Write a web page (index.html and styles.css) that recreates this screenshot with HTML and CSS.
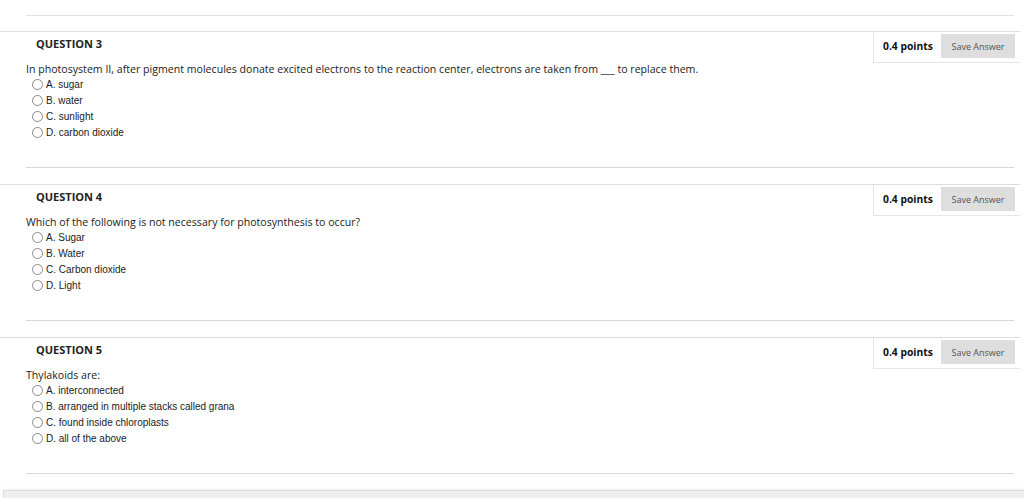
FILE: index.html
```html
<!DOCTYPE html>
<html>
<head>
<meta charset="utf-8">
<link rel="stylesheet" href="styles.css">
</head>
<body>
<div class="page">
  <div class="top-rule"></div>

  <div class="question">
    <div class="q-head">
      <div class="q-title">QUESTION 3</div>
      <div class="points-box">
        <span class="points">0.4 points</span>
        <button class="save">Save Answer</button>
      </div>
    </div>
    <div class="q-text">In photosystem II, after pigment molecules donate excited electrons to the reaction center, electrons are taken from ___ to replace them.</div>
    <ul class="options">
      <li><span class="radio"></span>A. sugar</li>
      <li><span class="radio"></span>B. water</li>
      <li><span class="radio"></span>C. sunlight</li>
      <li><span class="radio"></span>D. carbon dioxide</li>
    </ul>
    <div class="q-rule"></div>
  </div>

  <div class="question">
    <div class="q-head">
      <div class="q-title">QUESTION 4</div>
      <div class="points-box">
        <span class="points">0.4 points</span>
        <button class="save">Save Answer</button>
      </div>
    </div>
    <div class="q-text">Which of the following is not necessary for photosynthesis to occur?</div>
    <ul class="options">
      <li><span class="radio"></span>A. Sugar</li>
      <li><span class="radio"></span>B. Water</li>
      <li><span class="radio"></span>C. Carbon dioxide</li>
      <li><span class="radio"></span>D. Light</li>
    </ul>
    <div class="q-rule"></div>
  </div>

  <div class="question">
    <div class="q-head">
      <div class="q-title">QUESTION 5</div>
      <div class="points-box">
        <span class="points">0.4 points</span>
        <button class="save">Save Answer</button>
      </div>
    </div>
    <div class="q-text">Thylakoids are:</div>
    <ul class="options">
      <li><span class="radio"></span>A. interconnected</li>
      <li><span class="radio"></span>B. arranged in multiple stacks called grana</li>
      <li><span class="radio"></span>C. found inside chloroplasts</li>
      <li><span class="radio"></span>D. all of the above</li>
    </ul>
    <div class="q-rule"></div>
  </div>

  <div class="bottom-bar"></div>
</div>
</body>
</html>
```

FILE: styles.css
```css
* { box-sizing: border-box; }
html, body {
  margin: 0;
  padding: 0;
  background: #fff;
  overflow: hidden;
}
body {
  font-family: "Open Sans", "Liberation Sans", sans-serif;
  color: #222;
  width: 1024px;
  height: 498px;
}
.page {
  padding-top: 15px;
}
.top-rule {
  height: 1px;
  background: #e2e2e2;
  margin: 0 10px 15px 26px;
}
.question {
  border-top: 1px solid #dcdcdc;
  margin-right: 4px;
}
.q-head {
  display: flex;
  justify-content: space-between;
  align-items: flex-start;
  height: 31px;
}
.q-title {
  font-weight: 700;
  font-size: 11px;
  line-height: 14px;
  padding: 5px 0 0 36px;
  color: #222;
}
.points-box {
  display: flex;
  align-items: flex-start;
  height: 31px;
  width: 147px;
  border-left: 1px solid #e6e6e6;
  border-bottom: 1px solid #e6e6e6;
  padding: 2px 0 0 0;
}
.points {
  font-weight: 700;
  font-size: 10.3px;
  line-height: 24px;
  padding-left: 9px;
  width: 67px;
  color: #111;
}
.save {
  font-family: "Open Sans", "Liberation Sans", sans-serif;
  font-size: 9px;
  color: #555;
  background: #dedede;
  border: none;
  width: 74px;
  height: 24px;
  padding: 0;
  margin: 0;
}
.q-text {
  font-size: 10.6px;
  line-height: 13px;
  padding-left: 26px;
  color: #222;
}
.options {
  list-style: none;
  margin: 0;
  padding: 0 0 0 32px;
  font-family: "Liberation Sans", Arial, sans-serif;
  font-size: 10px;
  color: #1a1a1a;
}
.options li {
  display: flex;
  align-items: center;
  height: 16px;
}
.radio {
  width: 11px;
  height: 11px;
  border: 1px solid #8a8a8a;
  border-radius: 50%;
  margin-right: 3px;
  background: #fff;
  flex: none;
}
.q-rule {
  height: 1px;
  background: #d8d8d8;
  margin: 27px 6px 16px 26px;
}
.bottom-bar {
  margin: 0 0 0 3px;
  height: 10px;
  background: #efefef;
  border-top: 1px solid #dadada;
  border-left: 1px solid #dadada;
  box-shadow: 0 -2px 3px rgba(0,0,0,0.04);
}
```
